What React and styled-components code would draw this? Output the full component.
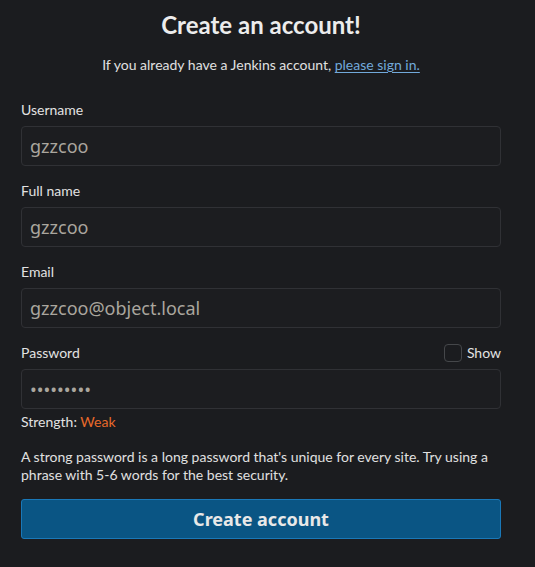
import React from "react";
import styled, { createGlobalStyle } from "styled-components";

const Global = createGlobalStyle`
  html, body { margin: 0; padding: 0; background: #1b1c1f; }
  body { font-family: Lato, "Noto Sans", sans-serif; color: #e3e3e3; }
  * { box-sizing: border-box; }
`;

const Page = styled.div`
  width: 535px;
  min-height: 567px;
  padding: 9px 34px 0 21px;
  background: #1b1c1f;
`;

const Title = styled.h1`
  margin: 0;
  font-family: Lato, sans-serif;
  font-size: 24px;
  line-height: 32px;
  font-weight: 700;
  text-align: center;
  color: #ececec;
`;

const Sub = styled.p`
  margin: 14px 0 25px;
  font-size: 14px;
  line-height: 20px;
  text-align: center;
  color: #e0e0e0;
`;

const Link = styled.a`
  color: #72a9da;
  text-decoration: underline;
  text-underline-offset: 2px;
`;

const Field = styled.div`
  display: flex;
  flex-direction: column;
  margin-bottom: ${(p) => (p.$last ? 0 : 15)}px;
`;

const LabelRow = styled.div`
  display: flex;
  align-items: center;
  justify-content: space-between;
  height: 20px;
  margin-bottom: 6px;
`;

const Label = styled.label`
  font-size: 14px;
  line-height: 20px;
  color: #e2e2e2;
`;

const ShowToggle = styled.label`
  display: flex;
  align-items: center;
  gap: 5px;
  font-size: 14px;
  line-height: 20px;
  color: #e2e2e2;
`;

const Box = styled.span`
  width: 18px;
  height: 18px;
  border: 1px solid #45474a;
  border-radius: 4px;
  background: #1b1c1f;
`;

const Input = styled.input`
  width: 100%;
  height: 40px;
  padding: 0 8px;
  border: 1px solid #303135;
  border-radius: 4px;
  background: #1c1d20;
  color: #aaa69e;
  font-family: "Noto Sans", sans-serif;
  font-size: 18px;
  outline: none;
`;

const Strength = styled.div`
  margin-top: 3px;
  font-size: 14px;
  line-height: 20px;
  color: #e2e2e2;
`;

const Weak = styled.span`
  color: #e8692a;
`;

const Hint = styled.p`
  margin: 16px 0 0;
  font-size: 14px;
  line-height: 18px;
  color: #e0e0e0;
`;

const Button = styled.button`
  width: 100%;
  height: 40px;
  margin-top: 15px;
  border: 1px solid #1a78b8;
  border-radius: 3px;
  background: #0a5584;
  color: #e8e8e8;
  font-family: "Noto Sans", sans-serif;
  font-size: 18px;
  font-weight: 700;
  cursor: pointer;
`;

export default function App() {
  return (
    <>
      <Global />
      <Page>
        <Title>Create an account!</Title>
        <Sub>
          If you already have a Jenkins account, <Link href="#">please sign in.</Link>
        </Sub>
        <Field>
          <LabelRow><Label>Username</Label></LabelRow>
          <Input defaultValue="gzzcoo" />
        </Field>
        <Field>
          <LabelRow><Label>Full name</Label></LabelRow>
          <Input defaultValue="gzzcoo" />
        </Field>
        <Field>
          <LabelRow><Label>Email</Label></LabelRow>
          <Input defaultValue="gzzcoo@object.local" />
        </Field>
        <Field $last>
          <LabelRow>
            <Label>Password</Label>
            <ShowToggle><Box />Show</ShowToggle>
          </LabelRow>
          <Input type="password" defaultValue="123456789" />
        </Field>
        <Strength>Strength: <Weak>Weak</Weak></Strength>
        <Hint>
          A strong password is a long password that's unique for every site. Try using a phrase with 5-6 words for the best security.
        </Hint>
        <Button>Create account</Button>
      </Page>
    </>
  );
}
